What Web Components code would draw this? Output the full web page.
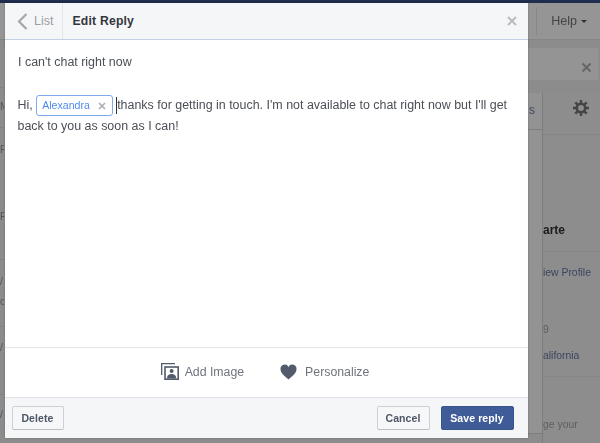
<!DOCTYPE html>
<html>
<head>
<meta charset="utf-8">
<style>
    html, body { margin: 0; padding: 0; }
    body { width: 600px; height: 443px; overflow: hidden; font-family: "Liberation Sans", Arial, sans-serif; }
    .caret { display: inline-block; width: 1px; height: 17px; background: #333; margin: 0 0 0 3px; vertical-align: middle; }
</style>
</head>
<body>
<page-backdrop></page-backdrop>
<reply-dialog>
    <span slot="title">I can't chat right now</span>
    Hi, <name-token>Alexandra</name-token><i class="caret"></i>thanks for getting in touch. I'm not available to chat right now but I'll get back to you as soon as I can!
</reply-dialog>

<script>
class PageBackdrop extends HTMLElement {
    constructor() {
        super();
        this.attachShadow({ mode: 'open' });
        this.shadowRoot.innerHTML = `
            <style>
                :host {
                    display: flex;
                    flex-direction: column;
                    width: 600px;
                    height: 443px;
                    background: #8c8c8c;
                    color: #3f3f3f;
                    font-size: 10.4px;
                    overflow: hidden;
                    filter: blur(0.4px);
                }
                .navy { height: 3px; background: #1f2d4e; flex: none; }
                .top {
                    height: 37px;
                    flex: none;
                    background: #959595;
                    border-bottom: 1px solid #868686;
                    display: flex;
                    align-items: center;
                    justify-content: flex-end;
                    padding-right: 13px;
                    box-sizing: border-box;
                    font-size: 12.5px;
                    color: #444;
                }
                .sep { width: 1px; height: 28px; background: #868686; margin-right: 14px; }
                .tri { width: 0; height: 0; border: 3px solid transparent; border-top-color: #333; border-bottom: 0; margin-left: 4px; }
                .below { flex: 1; display: flex; min-height: 0; }
                .left { width: 4px; flex: none; overflow: hidden; display: flex; flex-direction: column; color: #555; }
                .left div { border-bottom: 1px solid #808080; box-sizing: border-box; white-space: nowrap; line-height: 12px; }
                .left .plain { border: 0; }
                .main { flex: 1; display: flex; flex-direction: column; min-width: 0; }
                .search {
                    height: 32px;
                    margin: 8px 2px 0 0;
                    flex: none;
                    background: #949494;
                    display: flex;
                    align-items: center;
                    justify-content: flex-end;
                    padding: 6px 6px 0 0;
                    box-sizing: border-box;
                }
                .side {
                    flex: 1;
                    margin: 13px 0 0 524px;
                    display: grid;
                    grid-template-columns: 14px 1fr;
                    min-height: 0;
                }
                .band { background: #939393; height: 340px; border-bottom: 1px solid #7e7e7e; display: flex; flex-direction: column; }
                .tab { height: 37px; border-bottom: 1px solid #7e7e7e; font-size: 12px; color: #3a4560; display: flex; align-items: center; padding: 0 0 3px 1px; box-sizing: border-box; }
                .col { border-left: 1px solid #7c7c7c; overflow: hidden; display: flex; flex-direction: column; background: #8d8d8d; }
                .gear { height: 34px; flex: none; display: flex; align-items: flex-start; justify-content: flex-end; padding: 7px 11px 0 0; border-bottom: 1px solid #858585; }
                .name { font-weight: bold; font-size: 12px; color: #1b1b1b; margin-top: 88px; height: 28px; border-bottom: 1px solid #868686; }
                .link { color: #3a4560; white-space: nowrap; }
                .muted { color: #5e5e5e; white-space: nowrap; }
                .rule { border-top: 1px solid #868686; }
            </style>
            <div class="navy"></div>
            <div class="top"><span class="sep"></span>Help<span class="tri"></span></div>
            <div class="below">
                <div class="left">
                    <div style="height:48px"></div>
                    <div style="height:40px;padding-top:13px">M</div>
                    <div class="plain" style="height:67px;padding-top:16px">P</div>
                    <div style="height:65px;padding-top:16px">P</div>
                    <div style="height:67px;padding-top:16px">/<div class="plain" style="margin-top:8px">o</div></div>
                    <div style="height:68px;padding-top:15px">/</div>
                    <div class="plain" style="height:48px;padding-top:14px">/</div>
                </div>
                <div class="main">
                    <div class="search">
                        <svg width="11" height="11" viewBox="0 0 11 11"><path d="M1.500 1.500l8 8M9.500 1.500l-8 8" stroke="#666" stroke-width="2"/></svg>
                    </div>
                    <div class="side">
                        <div class="band"><div class="tab">s</div></div>
                        <div class="col">
                            <div class="gear">
                                <svg width="16" height="16" viewBox="0 0 16 16"><circle cx="8" cy="8" r="4.2" fill="none" stroke="#444" stroke-width="2.6"/><path d="M8 0v3M8 13v3M0 8h3M13 8h3M2.300 2.300l2.200 2.200M11.500 11.500l2.200 2.200M13.700 2.300l-2.200 2.200M4.500 11.500l-2.200 2.200" stroke="#444" stroke-width="2.400"/></svg>
                            </div>
                            <div class="name">arte</div>
                            <div class="link" style="margin-top:15px">iew Profile</div>
                            <div class="muted" style="margin-top:46px">9</div>
                            <div class="link" style="margin-top:15px">alifornia</div>
                            <div class="rule" style="margin-top:15px"></div>
                            <div class="muted" style="margin-top:42px">ge your</div>
                        </div>
                    </div>
                </div>
            </div>
        `;
    }
}

class NameToken extends HTMLElement {
    constructor() {
        super();
        this.attachShadow({ mode: 'open' });
        this.shadowRoot.innerHTML = `
            <style>
                :host {
                    display: inline-flex;
                    align-items: center;
                    justify-content: space-between;
                    box-sizing: border-box;
                    width: 77px;
                    height: 21px;
                    padding: 0 6px 0 5px;
                    border: 1px solid #7fa9ee;
                    border-radius: 3px;
                    background: #fff;
                    color: #4f8bee;
                    font-size: 10.6px;
                    vertical-align: middle;
                }
            </style>
            <slot></slot>
            <svg width="8" height="8" viewBox="0 0 8 8"><path d="M1 1l6 6M7 1l-6 6" stroke="#a9adb4" stroke-width="1.6"/></svg>
        `;
    }
}

class FbButton extends HTMLElement {
    constructor() {
        super();
        this.attachShadow({ mode: 'open' });
        this.shadowRoot.innerHTML = `
            <style>
                :host {
                    display: inline-flex;
                    align-items: center;
                    justify-content: center;
                    box-sizing: border-box;
                    height: 24px;
                    border: 1px solid #ced0d4;
                    border-bottom-color: #bdbfc4;
                    border-radius: 2px;
                    background: #f6f7f9;
                    color: #4e5665;
                    font-size: 10.5px;
                    font-weight: bold;
                    letter-spacing: 0.1px;
                }
                :host([primary]) {
                    background: #3f5b98;
                    border-color: #3a5490;
                    color: #fff;
                }
            </style>
            <slot></slot>
        `;
    }
}

class ReplyDialog extends HTMLElement {
    constructor() {
        super();
        this.attachShadow({ mode: 'open' });
        this.shadowRoot.innerHTML = `
            <style>
                :host {
                    position: absolute;
                    left: 4.5px;
                    top: 3px;
                    width: 523px;
                    height: 435px;
                    display: flex;
                    flex-direction: column;
                    background: #fff;
                    color: #4b4f56;
                    font-size: 12.45px;
                    box-shadow: 0 0 2px rgba(0,0,0,.25);
                    filter: blur(0.4px);
                }
                header {
                    flex: none;
                    height: 36px;
                    display: flex;
                    align-items: center;
                    background: #f5f6f8;
                    border-bottom: 1px solid #c3cfe3;
                }
                .back {
                    width: 58px;
                    height: 100%;
                    box-sizing: border-box;
                    flex: none;
                    display: flex;
                    align-items: center;
                    padding-left: 12.5px;
                    gap: 6px;
                    border-right: 1px solid #e4e6ea;
                    color: #9b9fa6;
                    font-size: 12.5px;
                }
                h1 {
                    flex: 1;
                    margin: 0;
                    padding-left: 10px;
                    font-size: 12.2px;
                    color: #33363b;
                    letter-spacing: 0.2px;
                }
                .close { margin-right: 11px; }
                .content { flex: 1; padding: 14px 14px 0 13px; }
                .title { height: 41px; line-height: 16px; padding-left: 0.5px; }
                .text { line-height: 21px; }
                .tools {
                    flex: none;
                    height: 50px;
                    border-top: 1px solid #e4e6ea;
                    display: flex;
                    align-items: center;
                    justify-content: center;
                    gap: 36px;
                    color: #6f747c;
                    font-size: 12.3px;
                    padding: 0 2px 2px 0;
                    box-sizing: border-box;
                }
                .tool { display: flex; align-items: center; gap: 6px; }
                .tool + .tool { gap: 8px; }
                footer {
                    flex: none;
                    height: 41px;
                    box-sizing: border-box;
                    border-top: 1px solid #dfe1e6;
                    background: #f5f6f8;
                    display: flex;
                    align-items: center;
                    padding: 0 14px 0 7px;
                    gap: 11px;
                }
                .delete { width: 52px; margin-right: auto; }
                .cancel { width: 53px; }
                .save { width: 73px; }
            </style>
            <header>
                <div class="back">
                    <svg width="11" height="17" viewBox="0 0 11 17"><path d="M9.500 1L2 8.500 9.500 16" fill="none" stroke="#a3a7ad" stroke-width="2.200"/></svg>
                    List
                </div>
                <h1>Edit Reply</h1>
                <svg class="close" width="10" height="10" viewBox="0 0 10 10"><path d="M1 1l8 8M9 1l-8 8" stroke="#b9bcc2" stroke-width="2"/></svg>
            </header>
            <div class="content">
                <div class="title"><slot name="title"></slot></div>
                <div class="text"><slot></slot></div>
            </div>
            <div class="tools">
                <div class="tool">
                    <svg width="18" height="17" viewBox="0 0 18 17"><path d="M0.700 12V0.700H14" fill="none" stroke="#525a6c" stroke-width="1.300"/><rect x="4" y="4" width="13.200" height="12.200" fill="none" stroke="#525a6c" stroke-width="1.600"/><circle cx="10.600" cy="8" r="2" fill="#525a6c"/><path d="M6 15.500c0-3.500 2.500-4.500 4.600-4.500s4.600 1 4.600 4.500z" fill="#525a6c"/></svg>
                    Add Image
                </div>
                <div class="tool">
                    <svg width="17" height="16" viewBox="0 0 17 16"><path d="M8.500 15.500C4 11.500.5 9 .5 5A4.200 4.200 0 0 1 8.500 3 4.200 4.200 0 0 1 16.500 5c0 4-3.500 6.500-8 10.500z" fill="#525a6c"/></svg>
                    Personalize
                </div>
            </div>
            <footer>
                <fb-button class="delete">Delete</fb-button>
                <fb-button class="cancel">Cancel</fb-button>
                <fb-button class="save" primary>Save reply</fb-button>
            </footer>
        `;
    }
}

customElements.define('page-backdrop', PageBackdrop);
customElements.define('name-token', NameToken);
customElements.define('fb-button', FbButton);
customElements.define('reply-dialog', ReplyDialog);
</script>
</body>
</html>
